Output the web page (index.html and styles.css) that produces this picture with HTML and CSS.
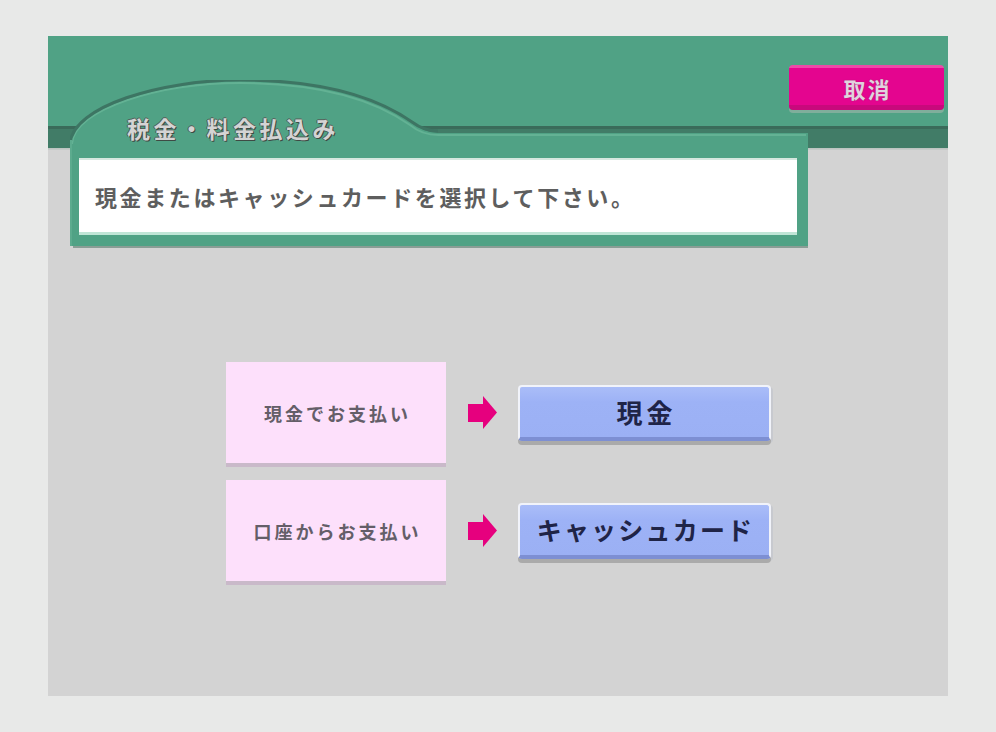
FILE: index.html
```html
<!DOCTYPE html>
<html lang="ja">
<head>
<meta charset="utf-8">
<title>税金・料金払込み</title>
<link rel="stylesheet" href="styles.css">
</head>
<body>
<div class="screen">
  <header class="header">
    <button class="cancel">取消</button>
  </header>
  <section class="panel">
    <svg class="panel-bg" width="738" height="168" viewBox="0 0 738 168" aria-hidden="true">
      <rect x="3" y="160" width="738" height="8" fill="#8a9d95"/>
      <path d="M0,166 V64 C2,26 92,0 170,0 C250,0 305,16 342,42 Q354,53 368,53 H738 V166 Z" fill="#50a285"/>
      <path d="M2,64 C4,28 92,3 170,3 C250,3 303,19 340,45 Q352,55 368,55 H736" fill="none" stroke="#63b294" stroke-width="2"/>
      <path d="M0,64 C2,26 92,0 170,0 C250,0 305,16 342,42 Q354,51 368,51" fill="none" stroke="#3d7563" stroke-width="3"/>
      <rect x="0" y="60" width="2" height="106" fill="#5cab8e"/>
    </svg>
    <h1 class="title">税金・料金払込み</h1>
    <div class="message">現金またはキャッシュカードを選択して下さい。</div>
  </section>
  <div class="options">
    <div class="row">
      <div class="label">現金でお支払い</div>
      <svg class="arrow" width="29" height="33" viewBox="0 0 29 33" aria-hidden="true">
        <rect x="0" y="8" width="17" height="18" fill="#e6007e"/>
        <polygon points="15,0 29,16.5 15,33" fill="#e6007e"/>
      </svg>
      <button class="choice">現金</button>
    </div>
    <div class="row">
      <div class="label">口座からお支払い</div>
      <svg class="arrow" width="29" height="33" viewBox="0 0 29 33" aria-hidden="true">
        <rect x="0" y="8" width="17" height="18" fill="#e6007e"/>
        <polygon points="15,0 29,16.5 15,33" fill="#e6007e"/>
      </svg>
      <button class="choice choice-long">キャッシュカード</button>
    </div>
  </div>
</div>
</body>
</html>
```

FILE: styles.css
```css
* { box-sizing: border-box; }

html, body {
  margin: 0;
  padding: 0;
  background: #e8e9e8;
}

body {
  font-family: "Noto Sans CJK JP", "Noto Sans", sans-serif;
  padding: 36px 0 0 48px;
}

.screen {
  width: 900px;
  height: 660px;
  background: #d3d3d3;
  display: flex;
  flex-direction: column;
  overflow: hidden;
}

.header {
  height: 114px;
  flex: none;
  background: linear-gradient(to bottom,
    #50a285 0, #50a285 90px,
    #3a6b5a 90px, #3a6b5a 93px,
    #417c67 93px, #417c67 112px,
    #b9c2be 112px, #c9cdcb 114px);
  display: flex;
  justify-content: flex-end;
  align-items: flex-start;
  padding: 29px 4px 0 0;
}

.cancel {
  width: 155px;
  height: 45px;
  border: none;
  border-radius: 4px;
  background: linear-gradient(to bottom, #ec4aa8 0, #ec4aa8 3px, #e4058f 3px, #e4058f 40px, #c8097c 40px);
  box-shadow: 0 3px 0 #7fae9b;
  color: #e2d2de;
  font-family: inherit;
  font-size: 22px;
  font-weight: 700;
  letter-spacing: 2px;
  padding: 0 0 0 2px;
  white-space: nowrap;
  text-shadow: 0 0 1px #8a2a66;
}

.panel {
  position: relative;
  width: 738px;
  height: 168px;
  flex: none;
  margin: -70px 0 0 22px;
  display: flex;
  flex-direction: column;
}

.panel-bg {
  position: absolute;
  left: 0;
  top: 0;
}

.title {
  position: relative;
  margin: 0;
  height: 78px;
  padding: 35px 0 0 57px;
  line-height: 26px;
  font-size: 23px;
  font-weight: 700;
  letter-spacing: 3.5px;
  white-space: nowrap;
  color: #d4d4d4;
  text-shadow: 1px 1px 0 #3e4a44, -1px 0 0 #55605a, 0 -1px 0 #55605a;
}

.message {
  position: relative;
  margin: 0 11px 0 9px;
  height: 77px;
  background: #ffffff;
  border-top: 2px solid #d6e7df;
  border-bottom: 3px solid #c0e5d6;
  display: flex;
  align-items: center;
  padding-left: 16px;
  font-size: 22px;
  font-weight: 700;
  letter-spacing: 2.6px;
  white-space: nowrap;
  color: #5e5e5e;
}

.options {
  margin: 114px 0 0 178px;
  display: flex;
  flex-direction: column;
  gap: 17px;
}

.row {
  display: flex;
  align-items: center;
}

.label {
  width: 220px;
  height: 101px;
  background: #fde0fb;
  box-shadow: 0 4px 0 #c9b9c9;
  display: flex;
  align-items: center;
  justify-content: center;
  padding-left: 3px;
  font-size: 18px;
  font-weight: 700;
  letter-spacing: 3px;
  white-space: nowrap;
  color: #645e68;
}

.arrow {
  margin-left: 22px;
  flex: none;
}

.choice {
  margin-left: 21px;
  width: 253px;
  height: 56px;
  border: 2px solid #f1f3fa;
  border-bottom: 4px solid #7d8fd3;
  border-radius: 4px;
  background: linear-gradient(to bottom, #aabdf8 0, #9db2f6 30%, #9bb0f4 100%);
  box-shadow: 0 4px 0 #aaaaaa, 2px 2px 0 #c7c9cf;
  font-family: inherit;
  font-size: 26px;
  font-weight: 700;
  letter-spacing: 4px;
  white-space: nowrap;
  color: #1f2447;
  padding: 0 0 0 4px;
  line-height: 1;
}

.choice-long {
  font-size: 25px;
  letter-spacing: 2.2px;
  padding-left: 2px;
}
```
